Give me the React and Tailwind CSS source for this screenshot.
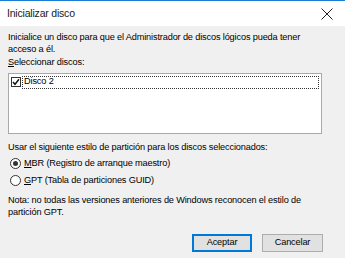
import React from 'react';

const Radio = ({ checked }) => (
    <span className="w-[11px] h-[11px] rounded-full border border-[#333333] bg-white flex items-center justify-center shrink-0">
        {checked && <span className="w-[5px] h-[5px] rounded-full bg-[#333333]" />}
    </span>
);

const App = () => {
    return (
        <div
            className="w-[345px] h-[258px] bg-[#f0f0f0] flex flex-col text-black overflow-hidden"
            style={{ fontFamily: '"Liberation Sans", Arial, sans-serif' }}
        >
            {/* title bar */}
            <div className="h-[26px] bg-white border-t border-[#1a7fd4] flex items-center justify-between shrink-0">
                <span className="pl-[7px] text-[10.5px] tracking-[-0.2px] text-[#1a1a1a]">Inicializar disco</span>
                <svg width="12" height="12" viewBox="0 0 12 12" className="mr-[12px]">
                    <path d="M0.5 0.5 L11.5 11.5 M11.5 0.5 L0.5 11.5" stroke="#222" strokeWidth="1" />
                </svg>
            </div>

            <div className="px-[8px] text-[9.2px] leading-[11.5px] tracking-[-0.15px]">
                <p className="mt-[6px]">
                    Inicialice un disco para que el Administrador de discos lógicos pueda tener
                    <br />acceso a él.
                </p>
                <p className="mt-[2px]"><span className="underline">S</span>eleccionar discos:</p>

                <div className="mt-[4px] w-[314px] h-[61px] bg-white border border-[#a9a9a9] pt-[2px] pl-[2px] pr-[2px]">
                    <div className="flex items-center">
                        <span className="w-[10px] h-[10px] border border-[#333333] bg-white flex items-center justify-center shrink-0">
                            <svg width="8" height="8" viewBox="0 0 8 8">
                                <path d="M1 4 L3 6.3 L7 1.2" stroke="#111" strokeWidth="1.4" fill="none" />
                            </svg>
                        </span>
                        <span className="ml-[1px] flex-1 h-[13px] border border-dotted border-[#333] flex items-center pl-[1px]">Disco 2</span>
                    </div>
                </div>

                <p className="mt-[8px]">Usar el siguiente estilo de partición para los discos seleccionados:</p>

                <div className="mt-[5px] flex flex-col gap-[5px] pl-[2px]">
                    <label className="flex items-center gap-[3px]">
                        <Radio checked />
                        <span><span className="underline">M</span>BR (Registro de arranque maestro)</span>
                    </label>
                    <label className="flex items-center gap-[3px]">
                        <Radio />
                        <span><span className="underline">G</span>PT (Tabla de particiones GUID)</span>
                    </label>
                </div>

                <p className="mt-[9px]">
                    Nota: no todas las versiones anteriores de Windows reconocen el estilo de
                    <br />partición GPT.
                </p>

                <div className="mt-[16px] flex justify-end gap-[10px] pr-[14px]">
                    <button className="w-[60px] h-[18px] bg-[#e1e1e1] border border-[#0078d7] outline outline-1 outline-[#0078d7] -outline-offset-2 text-[9.2px]">
                        Aceptar
                    </button>
                    <button className="w-[61px] h-[18px] bg-[#e1e1e1] border border-[#adadad] text-[9.2px]">
                        Cancelar
                    </button>
                </div>
            </div>
        </div>
    );
};

export default App;
